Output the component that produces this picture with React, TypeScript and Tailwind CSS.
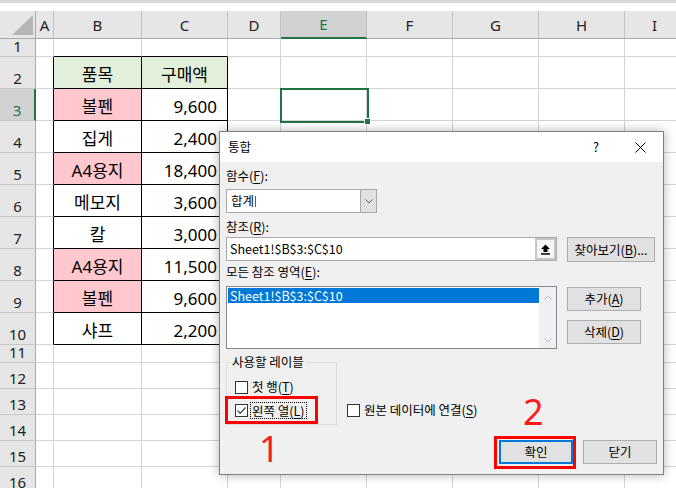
import React from "react";

type Row = { n: number; h: string; b?: string; c?: string; pink?: boolean; head?: boolean };

const rows: Row[] = [
  { n: 1, h: "h-[18px]" },
  { n: 2, h: "h-[32px]", b: "품목", c: "구매액", head: true },
  { n: 3, h: "h-[32px]", b: "볼펜", c: "9,600", pink: true },
  { n: 4, h: "h-[32px]", b: "집게", c: "2,400" },
  { n: 5, h: "h-[32px]", b: "A4용지", c: "18,400", pink: true },
  { n: 6, h: "h-[32px]", b: "메모지", c: "3,600" },
  { n: 7, h: "h-[32px]", b: "칼", c: "3,000" },
  { n: 8, h: "h-[32px]", b: "A4용지", c: "11,500", pink: true },
  { n: 9, h: "h-[32px]", b: "볼펜", c: "9,600", pink: true },
  { n: 10, h: "h-[32px]", b: "샤프", c: "2,200" },
  { n: 11, h: "h-[18px]" },
  { n: 12, h: "h-[26px]" },
  { n: 13, h: "h-[26px]" },
  { n: 14, h: "h-[26px]" },
  { n: 15, h: "h-[26px]" },
  { n: 16, h: "h-[26px]" },
];

const restCols = ["w-[53px]", "w-[86px]", "w-[86px]", "w-[86px]", "w-[86px]", "w-[60px]"];
const grid = "shrink-0 border-r border-b border-[#d4d4d4]";

const ColHeaders = () => {
  const cols = [
    { l: "A", w: "w-[18px]" },
    { l: "B", w: "w-[88px]" },
    { l: "C", w: "w-[86px]" },
    { l: "D", w: "w-[53px]" },
    { l: "E", w: "w-[86px]" },
    { l: "F", w: "w-[86px]" },
    { l: "G", w: "w-[86px]" },
    { l: "H", w: "w-[86px]" },
    { l: "I", w: "w-[60px]" },
  ];
  return (
    <div className="flex h-[28px] font-['Noto_Sans',sans-serif] text-[15px] leading-[20px]">
      <div className="relative w-[36px] shrink-0 bg-[#e6e6e6] border-r border-b border-[#ababab]">
        <svg className="absolute left-0 top-0" width="36" height="28">
          <polygon points="12,24 33,24 33,4" fill="#b5b5b5" />
        </svg>
      </div>
      {cols.map((c) =>
        c.l === "E" ? (
          <div
            key={c.l}
            className={`${c.w} shrink-0 flex items-center justify-center bg-[#d2d2d2] text-[#217346] border-r border-r-[#bdbdbd] border-b-2 border-b-[#217346]`}
          >
            {c.l}
          </div>
        ) : (
          <div
            key={c.l}
            className={`${c.w} shrink-0 flex items-center justify-center bg-[#e6e6e6] text-[#222] border-r border-r-[#c3c3c3] border-b border-b-[#ababab]`}
          >
            {c.l}
          </div>
        )
      )}
    </div>
  );
};

const SheetRow = ({ r }: { r: Row }) => {
  const inTable = r.n >= 2 && r.n <= 10;
  const bBg = r.head ? "bg-[#e2efda]" : r.pink ? "bg-[#ffc7ce]" : "bg-white";
  const cBg = r.head ? "bg-[#e2efda]" : "bg-white";
  return (
    <div className={`flex ${r.h}`}>
      {r.n === 3 ? (
        <div className="w-[36px] shrink-0 flex items-end justify-center overflow-hidden bg-[#d2d2d2] text-[#217346] border-r-2 border-r-[#217346] border-b border-b-[#c8c8c8] font-['Noto_Sans',sans-serif] text-[15px] leading-[20px]">
          {r.n}
        </div>
      ) : (
        <div className="w-[36px] shrink-0 flex items-end justify-center overflow-hidden bg-[#e6e6e6] text-[#222] border-r border-r-[#ababab] border-b border-b-[#c8c8c8] font-['Noto_Sans',sans-serif] text-[15px] leading-[20px]">
          {r.n}
        </div>
      )}
      {inTable ? (
        <div className="w-[18px] shrink-0 border-b border-b-[#d4d4d4] border-r border-r-black" />
      ) : (
        <div className={`w-[18px] ${grid}`} />
      )}
      {inTable ? (
        <>
          <div
            className={`w-[88px] shrink-0 flex items-end justify-center pb-[1px] border-r border-b border-black ${bBg} font-['Noto_Sans','Noto_Sans_CJK_KR',sans-serif] text-[17px] leading-[24px]`}
          >
            {r.b}
          </div>
          <div
            className={`w-[86px] shrink-0 flex items-end pb-[1px] border-r border-b border-black ${cBg} font-['Noto_Sans','Noto_Sans_CJK_KR',sans-serif] text-[17px] leading-[24px] ${
              r.head ? "justify-center" : "justify-end pr-[10px]"
            }`}
          >
            {r.c}
          </div>
        </>
      ) : r.n === 1 ? (
        <>
          <div className="w-[88px] shrink-0 border-r border-r-[#d4d4d4] border-b border-b-black" />
          <div className="w-[86px] shrink-0 border-r border-r-[#d4d4d4] border-b border-b-black" />
        </>
      ) : (
        <>
          <div className={`w-[88px] ${grid}`} />
          <div className={`w-[86px] ${grid}`} />
        </>
      )}
      {restCols.map((w, i) => (
        <div key={i} className={`${w} ${grid}`} />
      ))}
    </div>
  );
};

const Mn = ({ k }: { k: string }) => (
  <>
    (<span className="underline underline-offset-[2px]">{k}</span>)
  </>
);

const Check = ({
  label,
  k,
  checked,
  focus,
  cls,
}: {
  label: string;
  k: string;
  checked?: boolean;
  focus?: boolean;
  cls: string;
}) => (
  <div className={`flex h-[18px] items-center ${cls}`}>
    <div className="w-[13px] h-[13px] shrink-0 border border-[#333] bg-white flex items-center justify-center">
      {checked && (
        <svg width="11" height="11" viewBox="0 0 11 11">
          <polyline points="1.5,5.5 4.2,8.3 9.5,2.5" fill="none" stroke="#3c3c3c" strokeWidth="1.2" />
        </svg>
      )}
    </div>
    {focus ? (
      <span className="ml-[2px] px-[1px] border border-dotted border-black leading-[15px] whitespace-nowrap">
        {label}
        <Mn k={k} />
      </span>
    ) : (
      <span className="ml-[4px] whitespace-nowrap">
        {label}
        <Mn k={k} />
      </span>
    )}
  </div>
);

const btn = "h-[24px] w-[74px] flex items-center justify-center bg-[#e1e1e1] border border-[#adadad]";

const Dialog = () => (
  <div className="absolute left-[219px] top-[131px] w-[445px] h-[344px] border border-[#7f7f7f] bg-[#f0f0f0] shadow-[0_0_10px_rgba(0,0,0,0.3)] flex flex-col font-['Noto_Sans_CJK_KR','Noto_Sans',sans-serif] text-[12.5px] leading-[16px] text-black">
    <div className="h-[30px] shrink-0 bg-white flex items-center pl-[8px]">
      <span>통합</span>
      <span className="ml-auto">?</span>
      <svg className="ml-[36px] mr-[17px]" width="11" height="11" viewBox="0 0 11 11">
        <path d="M0.5 0.5 L10.5 10.5 M10.5 0.5 L0.5 10.5" stroke="#000" strokeWidth="1" />
      </svg>
    </div>
    <div className="flex flex-col px-[6px]">
      <div className="mt-[6px] h-[16px]">
        함수
        <Mn k="F" />:
      </div>
      <div className="mt-[5px] flex h-[24px] w-[151px] border border-[#a9a9a9] bg-white">
        <div className="flex-1 flex items-center pl-[4px]">
          합계<span className="ml-[1px] w-[1px] h-[11px] bg-[#0078d7]" />
        </div>
        <div className="w-[16px] border-l border-[#a9a9a9] bg-[#e1e1e1] flex items-center justify-center">
          <svg width="8" height="5" viewBox="0 0 8 5">
            <polyline points="0.5,0.5 4,4 7.5,0.5" fill="none" stroke="#606060" strokeWidth="1" />
          </svg>
        </div>
      </div>
      <div className="mt-[6px] h-[16px]">
        참조
        <Mn k="R" />:
      </div>
      <div className="mt-[2px] flex h-[25px]">
        <div className="flex h-[24px] w-[331px] border border-[#a9a9a9] bg-white">
          <div className="flex-1 flex items-center pl-[3px]">Sheet1!$B$3:$C$10</div>
          <div className="w-[21px] h-full border-2 border-[#c6c6c6] bg-[#f6f6f6] flex items-center justify-center">
            <svg width="11" height="11" viewBox="0 0 11 11">
              <path d="M5.5 0.5 L10 5 H7.5 V8 H3.5 V5 H1 Z" fill="#000" />
              <rect x="1" y="9.2" width="9" height="1.5" fill="#000" />
            </svg>
          </div>
        </div>
        <div className="ml-[10px] h-[25px] w-[88px] flex items-center justify-center bg-[#e1e1e1] border border-[#adadad]">
          찾아보기
          <Mn k="B" />
          ...
        </div>
      </div>
      <div className="mt-[2px] h-[16px]">
        모든 참조 영역
        <Mn k="E" />:
      </div>
      <div className="mt-[6px] flex">
        <div className="w-[331px] h-[63px] border border-[#828790] bg-white flex">
          <div className="flex-1 pt-[1px] pl-[1px]">
            <div className="h-[15px] bg-[#0078d7] text-white leading-[15px] pl-[2px]">Sheet1!$B$3:$C$10</div>
          </div>
          <div className="w-[17px] bg-[#f0f0f0] flex flex-col items-center justify-between pt-[8px] pb-[5px]">
            <svg width="8" height="5" viewBox="0 0 8 5">
              <polyline points="0.5,4.5 4,1 7.5,4.5" fill="none" stroke="#bdbdbd" strokeWidth="1" />
            </svg>
            <svg width="8" height="5" viewBox="0 0 8 5">
              <polyline points="0.5,0.5 4,4 7.5,0.5" fill="none" stroke="#bdbdbd" strokeWidth="1" />
            </svg>
          </div>
        </div>
        <div className="ml-[10px] flex flex-col">
          <div className={`mt-[1px] ${btn}`}>
            추가
            <Mn k="A" />
          </div>
          <div className={`mt-[9px] ${btn}`}>
            삭제
            <Mn k="D" />
          </div>
        </div>
      </div>
      <div className="mt-[5px] flex items-start">
        <fieldset className="w-[111px] h-[71px] shrink-0 border border-[#dcdcdc]">
          <legend className="ml-[4px] px-[1px] leading-[16px]">사용할 레이블</legend>
          <Check label="첫 행" k="T" cls="ml-[8px] mt-[8px]" />
          <Check label="왼쪽 열" k="L" checked focus cls="ml-[8px] mt-[5px]" />
        </fieldset>
        <Check label="원본 데이터에 연결" k="S" cls="ml-[10px] mt-[47px]" />
      </div>
      <div className="mt-[15px] flex justify-end gap-[10px] pr-[0px]">
        <div className="h-[24px] w-[74px] flex items-center justify-center bg-[#e1e1e1] border-2 border-[#0078d7]">확인</div>
        <div className={btn}>닫기</div>
      </div>
    </div>
  </div>
);

export default function App() {
  return (
    <div className="relative w-[676px] h-[488px] overflow-hidden bg-white">
      <div className="h-[3px] bg-[#dadada]" />
      <div className="h-[8px] bg-white" />
      <ColHeaders />
      {rows.map((r) => (
        <SheetRow key={r.n} r={r} />
      ))}

      {/* selected cell E3 */}
      <div className="absolute left-[280px] top-[88px] w-[89px] h-[35px] border-2 border-[#217346]" />
      <div className="absolute left-[364px] top-[118px] w-[7px] h-[7px] bg-[#217346] border border-white" />

      <Dialog />

      {/* annotations */}
      <div className="absolute left-[225px] top-[396px] w-[93px] h-[28px] border-[3px] border-[#ff0000]" />
      <div className="absolute left-[494px] top-[436px] w-[82px] h-[33px] border-[3px] border-[#ff0000]" />
      <div className="absolute left-[259px] top-[431px] font-['Noto_Sans',sans-serif] text-[36px] leading-none text-[#ff1a1a]">1</div>
      <div className="absolute left-[523px] top-[394px] font-['Noto_Sans',sans-serif] text-[36px] leading-none text-[#ff1a1a]">2</div>
    </div>
  );
}
